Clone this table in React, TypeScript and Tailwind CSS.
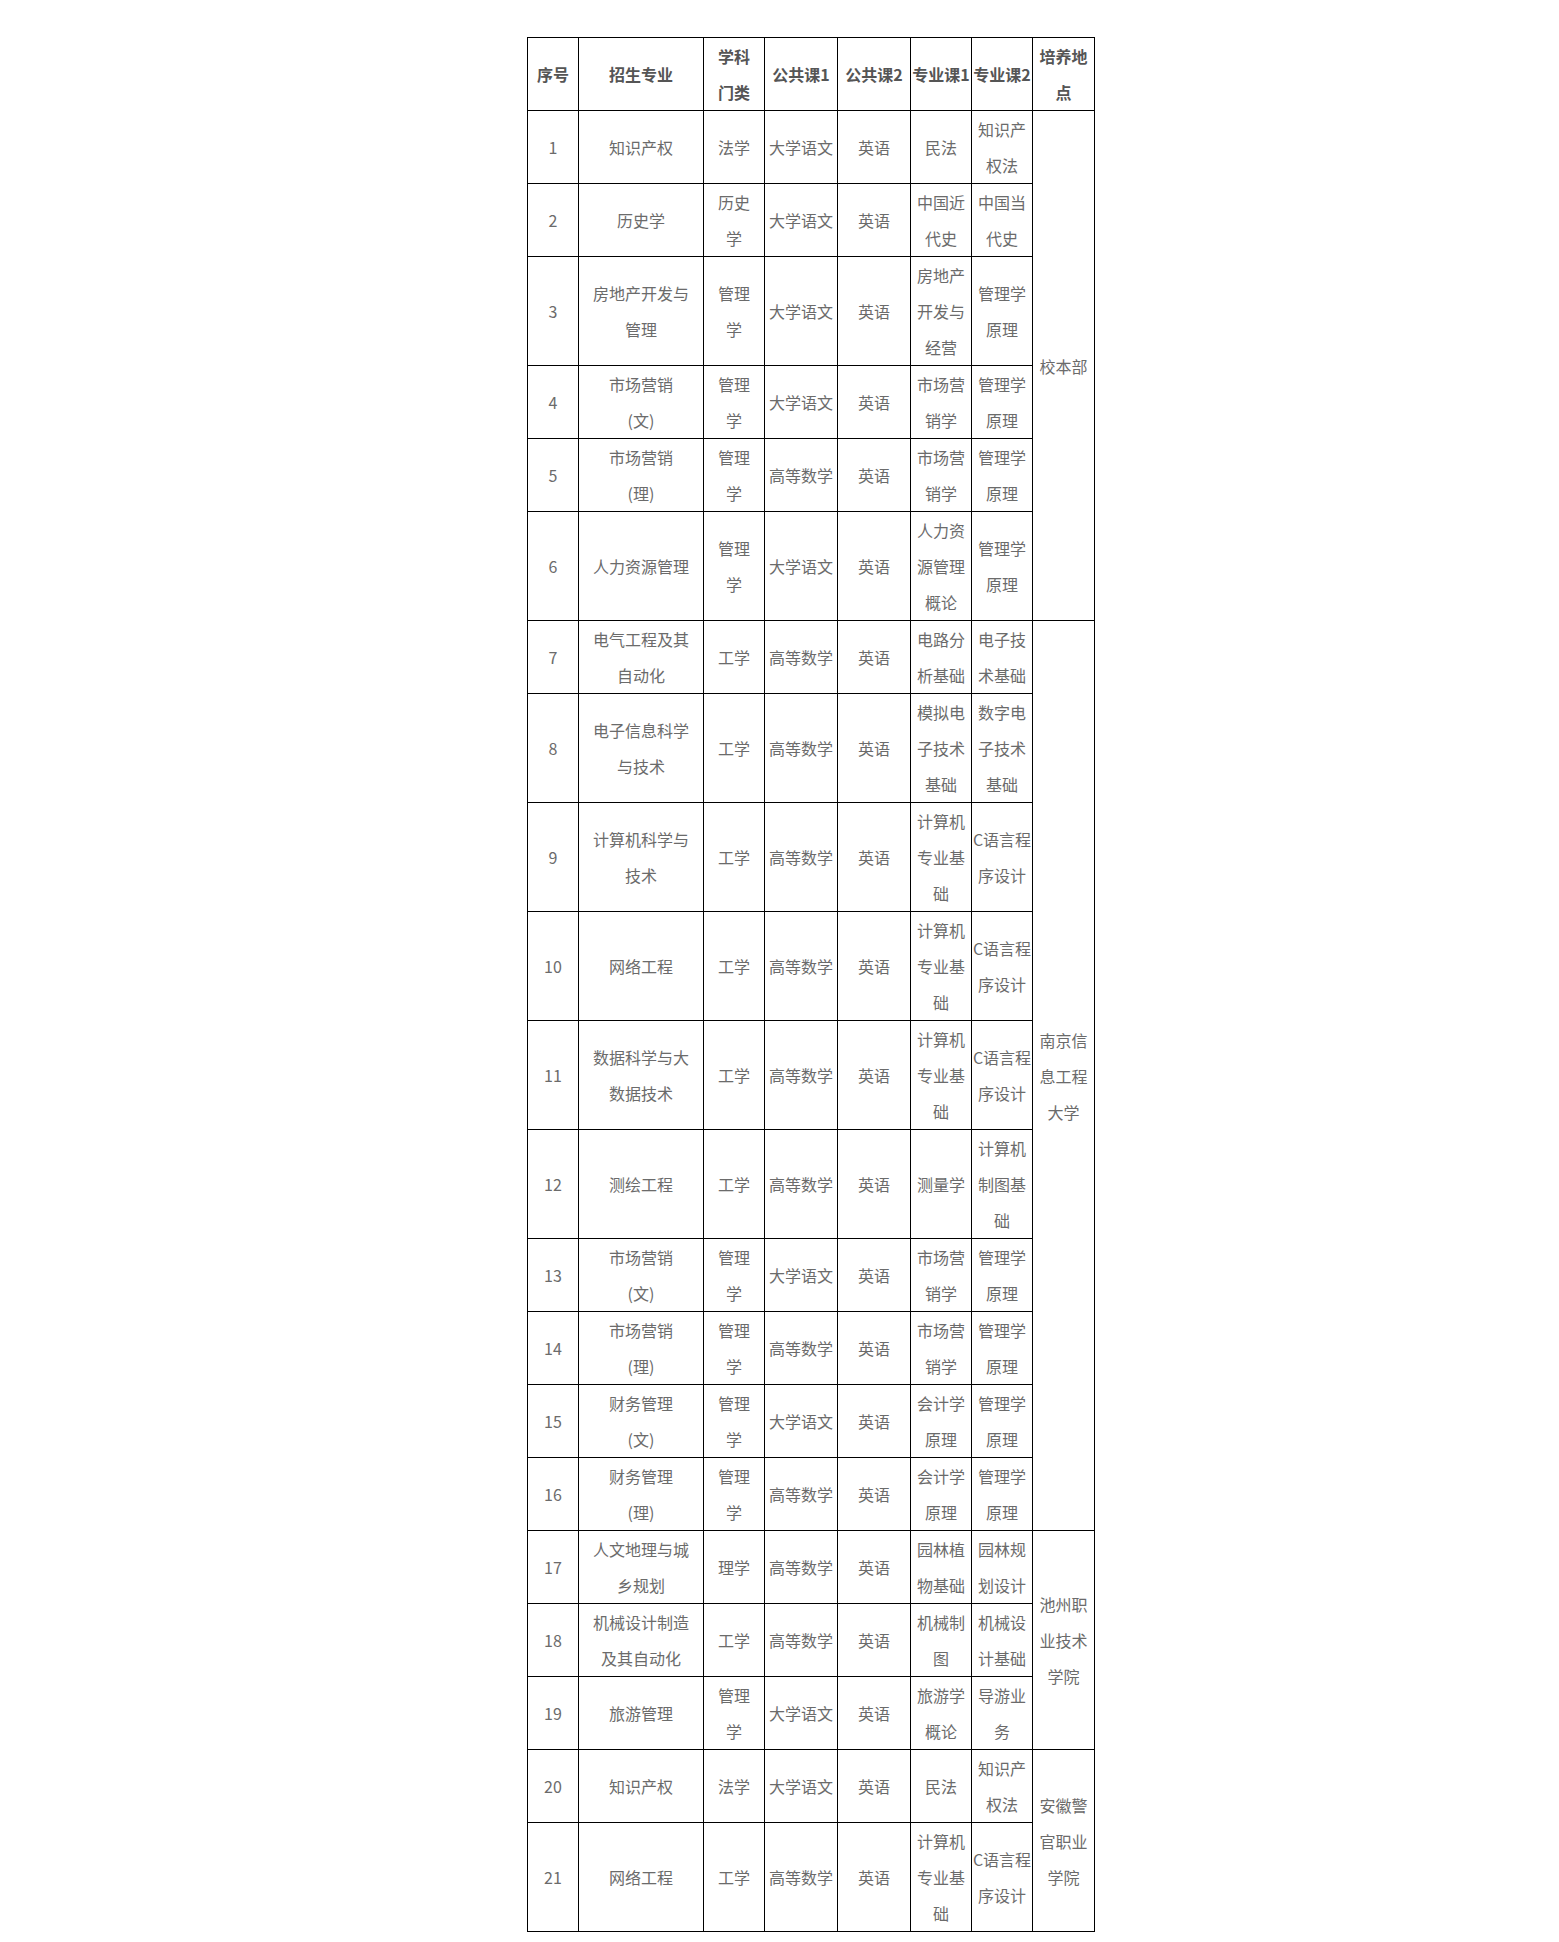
import React from "react";

type Row = string[];

const rows: Row[] = [
  ["1", "知识产权", "法学", "大学语文", "英语", "民法", "知识产/权法"],
  ["2", "历史学", "历史/学", "大学语文", "英语", "中国近/代史", "中国当/代史"],
  ["3", "房地产开发与/管理", "管理/学", "大学语文", "英语", "房地产/开发与/经营", "管理学/原理"],
  ["4", "市场营销/(文)", "管理/学", "大学语文", "英语", "市场营/销学", "管理学/原理"],
  ["5", "市场营销/(理)", "管理/学", "高等数学", "英语", "市场营/销学", "管理学/原理"],
  ["6", "人力资源管理", "管理/学", "大学语文", "英语", "人力资/源管理/概论", "管理学/原理"],
  ["7", "电气工程及其/自动化", "工学", "高等数学", "英语", "电路分/析基础", "电子技/术基础"],
  ["8", "电子信息科学/与技术", "工学", "高等数学", "英语", "模拟电/子技术/基础", "数字电/子技术/基础"],
  ["9", "计算机科学与/技术", "工学", "高等数学", "英语", "计算机/专业基/础", "C语言程/序设计"],
  ["10", "网络工程", "工学", "高等数学", "英语", "计算机/专业基/础", "C语言程/序设计"],
  ["11", "数据科学与大/数据技术", "工学", "高等数学", "英语", "计算机/专业基/础", "C语言程/序设计"],
  ["12", "测绘工程", "工学", "高等数学", "英语", "测量学", "计算机/制图基/础"],
  ["13", "市场营销/(文)", "管理/学", "大学语文", "英语", "市场营/销学", "管理学/原理"],
  ["14", "市场营销/(理)", "管理/学", "高等数学", "英语", "市场营/销学", "管理学/原理"],
  ["15", "财务管理/(文)", "管理/学", "大学语文", "英语", "会计学/原理", "管理学/原理"],
  ["16", "财务管理/(理)", "管理/学", "高等数学", "英语", "会计学/原理", "管理学/原理"],
  ["17", "人文地理与城/乡规划", "理学", "高等数学", "英语", "园林植/物基础", "园林规/划设计"],
  ["18", "机械设计制造/及其自动化", "工学", "高等数学", "英语", "机械制/图", "机械设/计基础"],
  ["19", "旅游管理", "管理/学", "大学语文", "英语", "旅游学/概论", "导游业/务"],
  ["20", "知识产权", "法学", "大学语文", "英语", "民法", "知识产/权法"],
  ["21", "网络工程", "工学", "高等数学", "英语", "计算机/专业基/础", "C语言程/序设计"],
];

const places: Record<number, { text: string; span: number }> = {
  0: { text: "校本部", span: 6 },
  6: { text: "南京信/息工程/大学", span: 10 },
  16: { text: "池州职/业技术/学院", span: 3 },
  19: { text: "安徽警/官职业/学院", span: 2 },
};

function Lines({ text }: { text: string }) {
  const parts = text.split("/");
  return (
    <>
      {parts.map((p, i) => (
        <React.Fragment key={i}>
          {i > 0 && <br />}
          {p}
        </React.Fragment>
      ))}
    </>
  );
}

const headers = ["序号", "招生专业", "学科/门类", "公共课1", "公共课2", "专业课1", "专业课2", "培养地/点"];

export default function App() {
  return (
    <div className="min-h-[1942px] bg-white pl-[527px] pt-[37px] pb-[11px] font-['Microsoft_YaHei','Noto_Sans_CJK_SC',sans-serif]">
      <table className="table-fixed w-[567px] border-collapse border border-black text-[16px] leading-[36px] text-[#6b6b6b]">
        <colgroup>
          <col className="w-[51px]" />
          <col className="w-[125px]" />
          <col className="w-[61px]" />
          <col className="w-[73px]" />
          <col className="w-[73px]" />
          <col className="w-[61px]" />
          <col className="w-[61px]" />
          <col className="w-[62px]" />
        </colgroup>
        <thead>
          <tr>
            {headers.map((h, i) => (
              <th
                key={i}
                className="border border-black p-0 text-center align-middle font-bold whitespace-nowrap text-[#555555]"
              >
                <Lines text={h} />
              </th>
            ))}
          </tr>
        </thead>
        <tbody>
          {rows.map((r, ri) => (
            <tr key={ri}>
              {r.map((c, ci) => (
                <td
                  key={ci}
                  className="border border-black p-0 text-center align-middle whitespace-nowrap"
                >
                  <Lines text={c} />
                </td>
              ))}
              {places[ri] && (
                <td
                  rowSpan={places[ri].span}
                  className="border border-black p-0 text-center align-middle whitespace-nowrap"
                >
                  <Lines text={places[ri].text} />
                </td>
              )}
            </tr>
          ))}
        </tbody>
      </table>
    </div>
  );
}
